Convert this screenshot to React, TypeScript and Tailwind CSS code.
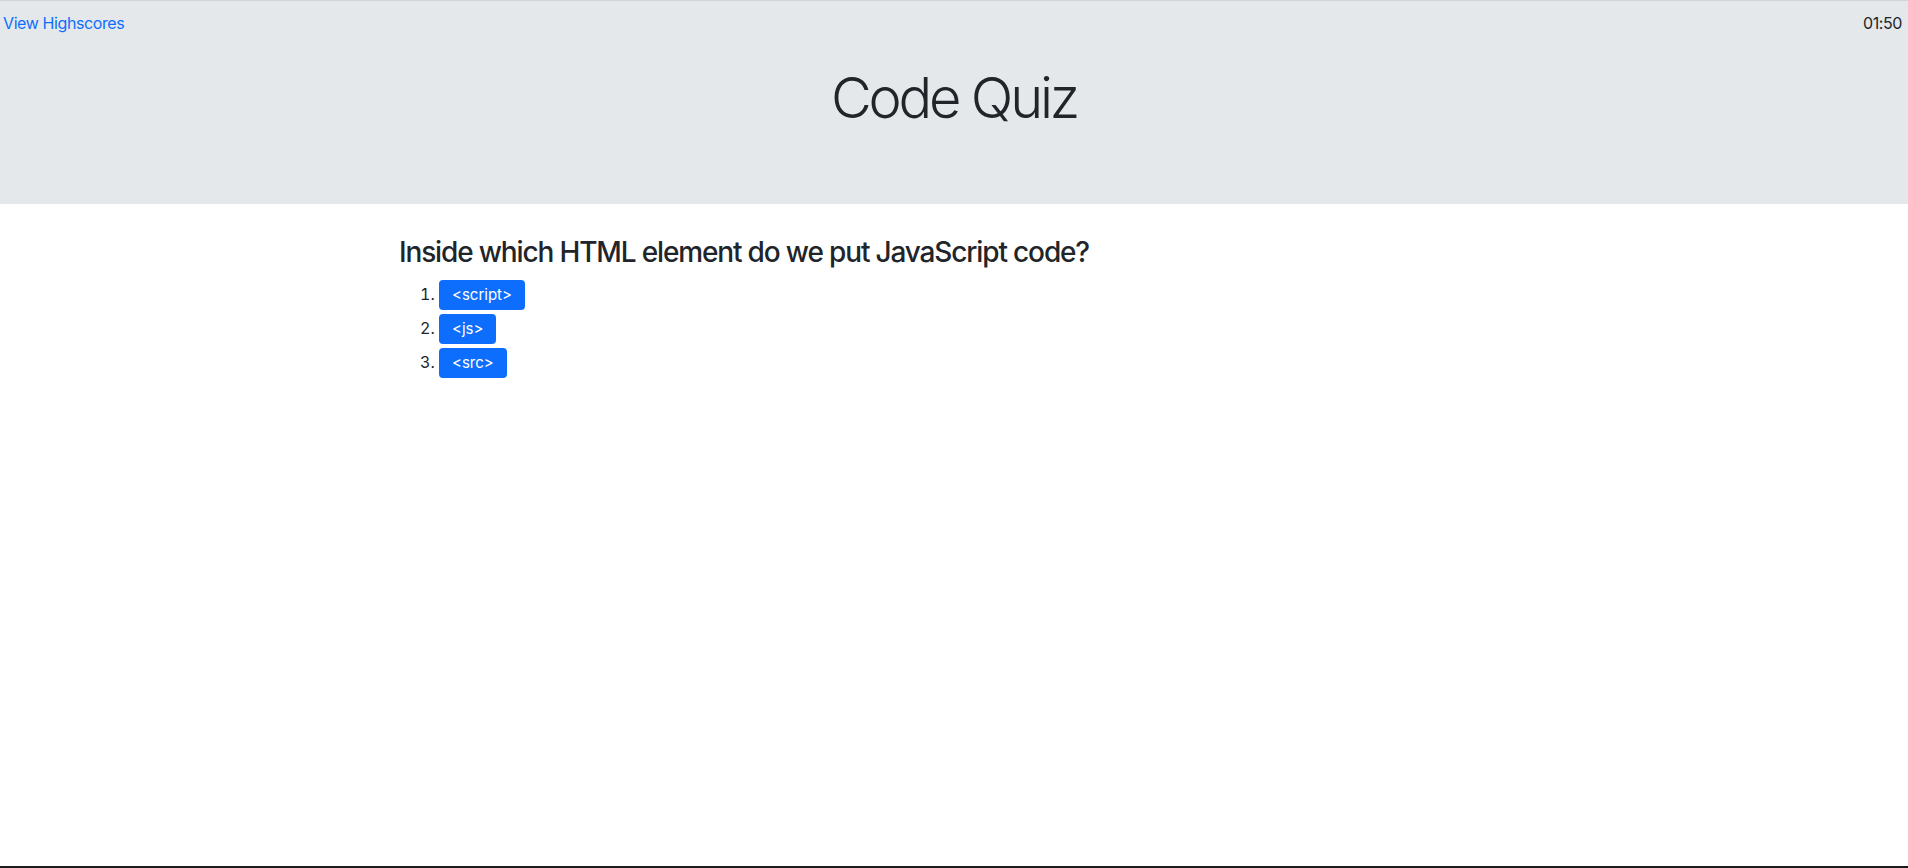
import { useState } from 'react';

const choices = ['<script>', '<js>', '<src>'];

export default function App() {
  const [time] = useState('01:50');

  return (
    <div className="min-h-[868px] flex flex-col bg-white text-[#212529] font-['Inter','Liberation_Sans',sans-serif]">
      <header className="bg-[#e4e8eb] border-t border-[#cfd4d9] pb-[72px]">
        <div className="flex justify-between items-start pt-[10px] px-[3px] pr-[6px] text-[16px] leading-6 tracking-[-0.4px]">
          <a href="#" className="text-[#0d6efd]">View Highscores</a>
          <span>{time}</span>
        </div>
        <h1 className="mt-[30px] text-center text-[56px] leading-[1.2] font-light tracking-[-3.2px]">Code Quiz</h1>
      </header>

      <main className="flex-1 w-full max-w-[1140px] mx-auto px-[15px] pt-[32px]">
        <h3 className="text-[28px] leading-[1.2] font-medium mb-2 tracking-[-1.15px]">Inside which HTML element do we put JavaScript code?</h3>
        <ol className="list-decimal pl-10 text-[16px]">
          {choices.map((c) => (
            <li key={c} className="py-[2px]">
              <button className="h-[30px] px-[13px] rounded bg-[#0d6efd] text-white text-[15px] leading-none align-baseline">
                {c}
              </button>
            </li>
          ))}
        </ol>
      </main>

      <div className="h-[2px] bg-[#1c1c1c]" />
    </div>
  );
}
